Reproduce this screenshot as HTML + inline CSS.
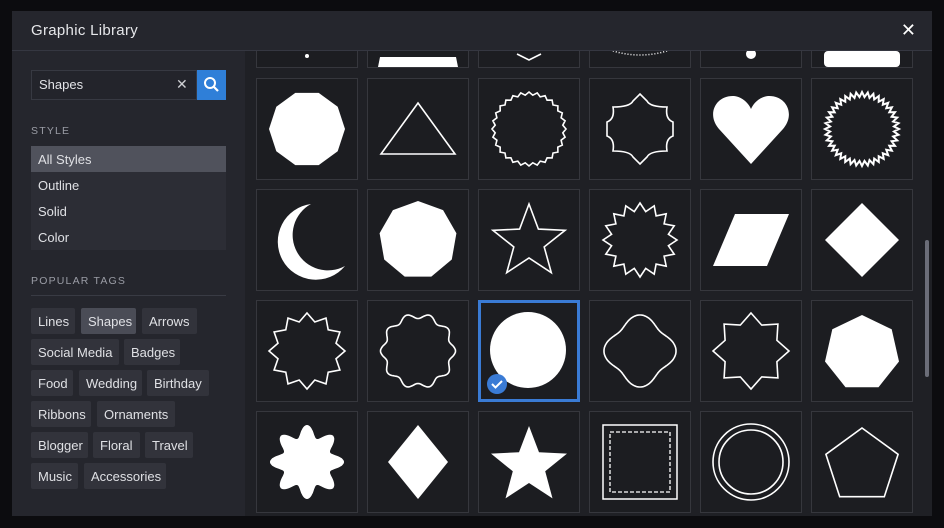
<!DOCTYPE html><html><head><meta charset="utf-8"><style>
*{margin:0;padding:0;box-sizing:border-box}
body{width:944px;height:528px;background:#0c0c0f;font-family:"Liberation Sans",sans-serif;position:relative;overflow:hidden}
.m{position:absolute;left:12px;top:11px;width:920px;height:505px;background:#25262d;overflow:hidden}
.hd{position:absolute;left:0;top:0;width:920px;height:40px;border-bottom:1px solid #353741;background:#25262d;z-index:3}
.hd .t{position:absolute;left:19px;top:11px;color:#e6e7ea;font-size:15px;letter-spacing:.3px}
.hd .x{position:absolute;right:16px;top:9px;color:#fff;font-size:18px}
.grid{position:absolute;left:233px;top:40px;width:687px;height:465px;background:#1f2025;overflow:hidden}
.c{position:absolute;width:102px;height:102px;background:#1c1d21;border:1px solid #36373d}
.c svg{position:absolute;left:0;top:0;width:100px;height:100px}
.sel{border:3px solid #3a7bd5}
.sb{position:absolute;left:913px;top:229px;width:4px;height:137px;background:#6b6d78;border-radius:2px}
.a{position:absolute;color:#e3e4e8;font-size:13px}
.lbl{position:absolute;left:19px;color:#9a9ca5;font-size:10.5px;letter-spacing:1.2px}
.li{position:absolute;left:19px;width:195px;height:26px;background:#2c2d35;color:#dfe0e4;font-size:13px;padding:6px 0 0 7px}
.tag{position:absolute;height:26px;background:#32333b;color:#dfe0e4;font-size:13px;padding:6px 0 0 7px;border-radius:2px}
</style></head><body>
<div class="m">
<div class="hd"><div class="t">Graphic Library</div><div class="x">✕</div></div>
<div style="position:absolute;left:19px;top:59px;width:166px;height:30px;background:#23242b;border:1px solid #373942"></div>
<div class="a" style="left:27px;top:66px">Shapes</div>
<div class="a" style="left:164px;top:65px;font-size:14px;color:#cfd0d4">✕</div>
<div style="position:absolute;left:185px;top:59px;width:29px;height:30px;background:#2f7fd8"><svg width="29" height="30"><circle cx="13" cy="13" r="5" fill="none" stroke="#fff" stroke-width="2"/><line x1="17" y1="17" x2="21" y2="21" stroke="#fff" stroke-width="2.2"/></svg></div>
<div class="lbl" style="top:114px">STYLE</div>
<div class="li" style="top:135px;background:#50525c">All Styles</div>
<div class="li" style="top:161px">Outline</div>
<div class="li" style="top:187px">Solid</div>
<div class="li" style="top:213px">Color</div>
<div class="lbl" style="top:264px">POPULAR TAGS</div>
<div style="position:absolute;left:19px;top:284px;width:195px;height:1px;background:#393b44"></div>
<div class="tag" style="left:19px;top:297px;width:44px">Lines</div>
<div class="tag" style="left:69px;top:297px;width:55px;background:#4a4c56">Shapes</div>
<div class="tag" style="left:130px;top:297px;width:55px">Arrows</div>
<div class="tag" style="left:19px;top:328px;width:88px">Social Media</div>
<div class="tag" style="left:112px;top:328px;width:56px">Badges</div>
<div class="tag" style="left:19px;top:359px;width:42px">Food</div>
<div class="tag" style="left:67px;top:359px;width:63px">Wedding</div>
<div class="tag" style="left:135px;top:359px;width:62px">Birthday</div>
<div class="tag" style="left:19px;top:390px;width:60px">Ribbons</div>
<div class="tag" style="left:85px;top:390px;width:78px">Ornaments</div>
<div class="tag" style="left:19px;top:421px;width:57px">Blogger</div>
<div class="tag" style="left:81px;top:421px;width:47px">Floral</div>
<div class="tag" style="left:133px;top:421px;width:48px">Travel</div>
<div class="tag" style="left:19px;top:452px;width:47px">Music</div>
<div class="tag" style="left:72px;top:452px;width:82px">Accessories</div>
<div class="grid" id="g"></div>
<div class="sb"></div>
</div>
<script>
function poly(n,r1,r2,rot,cx,cy){cx=cx||50;cy=cy||50;var p=[],k=r2?2*n:n;for(var i=0;i<k;i++){var r=(r2&&i%2)?r2:r1,a=(rot+i*360/k-90)*Math.PI/180;p.push((cx+r*Math.cos(a)).toFixed(1)+','+(cy+r*Math.sin(a)).toFixed(1));}return p.join(' ');}
function wave(n,r,amp,pts){var p=[];for(var i=0;i<=pts;i++){var a=i/pts*2*Math.PI,rr=r+amp*Math.cos(n*a);p.push((50+rr*Math.cos(a)).toFixed(1)+','+(50+rr*Math.sin(a)).toFixed(1));}return p.join(' ');}
var W='fill="#fff"',O='fill="none" stroke="#fff" stroke-width="1.6"';
var S=[
'<polygon '+W+' points="'+poly(10,38,0,18)+'"/>',
'<polygon '+O+' points="50,24 87,75 13,75"/>',
'<polygon '+O+' points="'+poly(28,37,34,0)+'"/>',
'<path '+O+' stroke-width="2" d="M23,28 Q40,28 43,22 L50,15 57,22 Q60,28 77,28 Q75,40 83,43 L83,57 Q75,60 77,72 Q60,72 57,78 L50,85 43,78 Q40,72 23,72 Q25,60 17,57 L17,43 Q25,40 23,28Z"/>',
'<path '+W+' d="M50,85 L18,50 C5,35 15,16 33,17 C42,18 48,25 50,30 C52,25 58,18 67,17 C85,16 95,35 82,50Z"/>',
'<polygon fill="none" stroke="#fff" stroke-width="2" points="'+poly(40,37,32,0)+'"/>',
'<path '+W+' d="M54,14 A38,38 0 1 0 88,76 A33,33 0 1 1 54,14Z"/>',
'<polygon '+W+' points="'+poly(9,39,0,0)+'"/>',
'<polygon '+O+' points="'+poly(5,38,16,0,50,52)+'"/>',
'<polygon '+O+' points="'+poly(16,37,29,0)+'"/>',
'<polygon '+W+' points="34,24 88,24 66,76 12,76"/>',
'<polygon '+W+' points="50,13 87,50 50,87 13,50"/>',
'<polygon '+O+' points="'+poly(12,38,30,0)+'"/>',
'<polygon '+O+' points="'+wave(10,35,2.5,200)+'"/>',
'<circle '+W+' cx="50" cy="50" r="38"/>',
'<polygon '+O+' points="'+wave(4,32,4,200)+'"/>',
'<polygon '+O+' points="'+poly(8,38,28,0)+'"/>',
'<polygon '+W+' points="'+poly(7,38,0,0,50,52)+'"/>',
'<polygon '+W+' points="'+wave(8,31,6,240)+'"/>',
'<polygon '+W+' points="50,13 80,50 50,87 20,50"/>',
'<polygon '+W+' points="'+poly(5,40,17,0,50,54)+'"/>',
'<rect x="13" y="13" width="74" height="74" fill="none" stroke="#fff" stroke-width="1.5"/><rect x="20" y="20" width="60" height="60" fill="none" stroke="#fff" stroke-width="1.3" stroke-dasharray="4 2"/>',
'<circle '+O+' cx="50" cy="50" r="38"/><circle '+O+' cx="50" cy="50" r="32"/>',
'<polygon '+O+' points="'+poly(5,38,0,0,50,54)+'"/>'
];
var top0=['<circle fill="#fff" cx="50" cy="89" r="2"/>','<polygon '+W+' points="12,90 88,90 90,100 10,100"/>','<polyline '+O+' stroke-width="2" points="38,87 50,93 62,87"/>','<path fill="none" stroke="#fff" stroke-width="1.5" stroke-dasharray="1 2" d="M20,83 Q50,93 80,83"/>','<circle fill="#fff" cx="50" cy="87" r="5"/>','<rect '+W+' x="12" y="84" width="76" height="16" rx="4"/>'];
var g=document.getElementById('g'),xs=[11,122,233,344,455,566],ys=[-85,27,138,249,360],h='';
for(var r=0;r<5;r++)for(var c=0;c<6;c++){var s=r==0?top0[c]:S[(r-1)*6+c],sel=(r==3&&c==2);
h+='<div class="c'+(sel?' sel':'')+'" style="left:'+xs[c]+'px;top:'+ys[r]+'px"><svg viewBox="0 0 100 100" style="'+(sel?'left:-3px;top:-3px':'')+'">'+s+'</svg>'+(sel?'<svg style="left:5px;top:70px;width:22px;height:22px" viewBox="0 0 22 22"><circle cx="11" cy="11" r="10" fill="#3a7bd5"/><polyline points="6,11 9.5,14.5 16,8" fill="none" stroke="#fff" stroke-width="2"/></svg>':'')+'</div>';}
g.innerHTML=h;
</script>
</body></html>
